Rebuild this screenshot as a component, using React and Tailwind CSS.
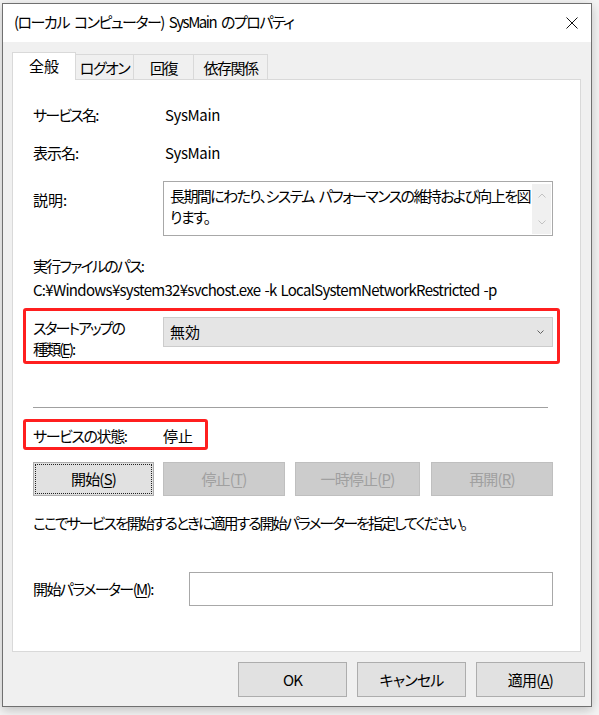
import React from 'react';

// SysMain のプロパティ ダイアログ (Windows 10 風)

function Mn({ children }) {
  return <span className="underline underline-offset-2">{children}</span>;
}

// 詰めた字間でもスペースを潰さない
function Sp({ w = 'w-[5px]' }) {
  return <span className={`inline-block ${w}`} />;
}

function Tab({ label, active, w }) {
  if (active) {
    return (
      <div className={`${w} h-[28px] bg-white border-l border-t border-r border-[#d9d9d9] flex items-start justify-center pt-[3px] leading-[20px]`}>
        {label}
      </div>
    );
  }
  return (
    <div className={`${w} h-[25px] mb-[1px] bg-[#f0f0f0] border-t border-r border-[#d9d9d9] flex items-center justify-center leading-[20px] pt-[2px] tracking-[-1.5px]`}>
      {label}
    </div>
  );
}

function SvcButton({ children, w, disabled, focused, className = '' }) {
  return (
    <div
      className={`${w} h-[34px] flex items-center justify-center border leading-[20px] tracking-[-0.8px] ${
        disabled
          ? 'bg-[#cccccc] border-[#bfbfbf] text-[#a0a0a0]'
          : 'bg-[#e1e1e1] border-[#adadad] text-black'
      } ${focused ? 'outline-1 outline-dotted outline-[#222] outline-offset-[-3px]' : ''} ${className}`}
    >
      {children}
    </div>
  );
}

export default function App() {
  return (
    <div className="w-[599px] h-[715px] overflow-hidden bg-[#f4f4f4] text-[15px] text-black font-['Noto_Sans_CJK_JP','Noto_Sans',sans-serif] [font-feature-settings:'palt'] pt-[3px] pl-[2px]">
      {/* window */}
      <div className="w-[590px] h-[704px] border border-[#707070] bg-[#f0f0f0] shadow-[0_3px_10px_rgba(0,0,0,0.22)] flex flex-col">
        {/* title bar */}
        <div className="h-[38px] bg-white flex items-center justify-between pl-[11px] pr-[14px]">
          <span className="leading-[20px] -mt-[2px] tracking-[-1.5px] whitespace-nowrap">
            (ローカル<Sp />コンピューター)<Sp />SysMain<Sp />のプロパティ
          </span>
          <svg width="12" height="12" viewBox="0 0 12 12" className="-mr-[1px] -mt-[1px]">
            <path d="M0.5 0.5 L11.5 11.5 M11.5 0.5 L0.5 11.5" stroke="#111" strokeWidth="1" fill="none" />
          </svg>
        </div>

        {/* tabs */}
        <div className="flex items-end h-[28px] mt-[10px] pl-[9px] relative z-10">
          <Tab label="全般" active w="w-[64px]" />
          <Tab label="ログオン" w="w-[58px]" />
          <Tab label="回復" w="w-[60px]" />
          <Tab label="依存関係" w="w-[74px]" />
        </div>

        {/* panel */}
        <div className="relative -mt-[1px] ml-[9px] w-[569px] h-[573px] bg-white border border-[#d9d9d9] pl-[20px] pt-[25px] leading-[20px]">
          <div className="flex">
            <div className="w-[132px] tracking-[-1.8px]">サービス名:</div>
            <div className="tracking-[-0.4px]">SysMain</div>
          </div>
          <div className="flex mt-[18px]">
            <div className="w-[132px] tracking-[-1px]">表示名:</div>
            <div className="tracking-[-0.4px]">SysMain</div>
          </div>

          <div className="flex mt-[18px]">
            <div className="w-[130px] pt-[9px]">説明:</div>
            <div className="w-[390px] h-[55px] border border-[#a8a8a8] flex">
              <div className="flex-1 min-w-0 overflow-hidden pl-[6px] pt-[3px] leading-[21px] whitespace-nowrap tracking-[-1.6px]">
                <div>
                  長期間にわたり、システム<Sp />パフォーマンスの維持および向上を図
                </div>
                <div>ります。</div>
              </div>
              <div className="w-[19px] shrink-0 mt-[2px] mb-[1px] mr-[1px] bg-[#f0f0f0] flex flex-col items-center justify-between py-[9px]">
                <svg width="8" height="5" viewBox="0 0 8 5">
                  <path d="M0.5 4.5 L4 1 L7.5 4.5" stroke="#c2c2c2" strokeWidth="1" fill="none" />
                </svg>
                <svg width="8" height="5" viewBox="0 0 8 5">
                  <path d="M0.5 0.5 L4 4 L7.5 0.5" stroke="#c2c2c2" strokeWidth="1" fill="none" />
                </svg>
              </div>
            </div>
          </div>

          <div className="mt-[20px] tracking-[-1.8px]">実行ファイルのパス:</div>
          <div className="mt-[4px] whitespace-nowrap tracking-[-0.7px]">
            C:¥Windows¥system32¥svchost.exe<Sp w="w-[4px]" />-k<Sp w="w-[4px]" />LocalSystemNetworkRestricted<Sp w="w-[4px]" />-p
          </div>

          <div className="flex mt-[17px]">
            <div className="w-[130px] leading-[21px] tracking-[-2px]">
              スタートアップの
              <br />
              種類(<Mn>E</Mn>):
            </div>
            <div className="w-[390px] h-[30px] bg-[#e5e5e5] border border-[#cccccc] flex items-center justify-between pl-[6px] pr-[8px]">
              <span>無効</span>
              <svg width="7" height="4" viewBox="0 0 7 4">
                <path d="M0.5 0.5 L3.5 3.5 L6.5 0.5" stroke="#606060" strokeWidth="1" fill="none" />
              </svg>
            </div>
          </div>

          <div className="mt-[48px] w-[515px] h-px bg-[#a0a0a0]" />

          <div className="flex mt-[18px]">
            <div className="w-[130px] tracking-[-1.4px]">サービスの状態:</div>
            <div>停止</div>
          </div>

          <div className="flex mt-[16px]">
            <SvcButton w="w-[121px]" focused>
              開始(<Mn>S</Mn>)
            </SvcButton>
            <SvcButton w="w-[122px]" disabled className="ml-[9px]">
              停止(<Mn>T</Mn>)
            </SvcButton>
            <SvcButton w="w-[125px]" disabled className="ml-[10px]">
              一時停止(<Mn>P</Mn>)
            </SvcButton>
            <SvcButton w="w-[122px]" disabled className="ml-[11px]">
              再開(<Mn>R</Mn>)
            </SvcButton>
          </div>

          <div className="mt-[17px] whitespace-nowrap tracking-[-2px]">
            ここでサービスを開始するときに適用する開始パラメーターを指定してください。
          </div>

          <div className="flex items-center mt-[39px]">
            <div className="w-[156px] tracking-[-1.6px]">
              開始パラメーター(<Mn>M</Mn>):
            </div>
            <div className="w-[364px] h-[34px] border border-[#a8a8a8] bg-white" />
          </div>

          {/* red annotation boxes */}
          <div className="absolute left-[10px] top-[228px] w-[537px] h-[56px] border-[3px] border-[#ff1f1f] rounded-[3px] pointer-events-none" />
          <div className="absolute left-[10px] top-[339px] w-[185px] h-[31px] border-[3px] border-[#ff1f1f] rounded-[3px] pointer-events-none" />
        </div>

        {/* dialog buttons */}
        <div className="flex justify-end gap-[10px] pr-[6px] mt-[10px]">
          <SvcButton w="w-[109px]" className="h-[35px]">OK</SvcButton>
          <SvcButton w="w-[109px]" className="h-[35px]">キャンセル</SvcButton>
          <SvcButton w="w-[109px]" className="h-[35px]">
            適用(<Mn>A</Mn>)
          </SvcButton>
        </div>
      </div>
    </div>
  );
}
